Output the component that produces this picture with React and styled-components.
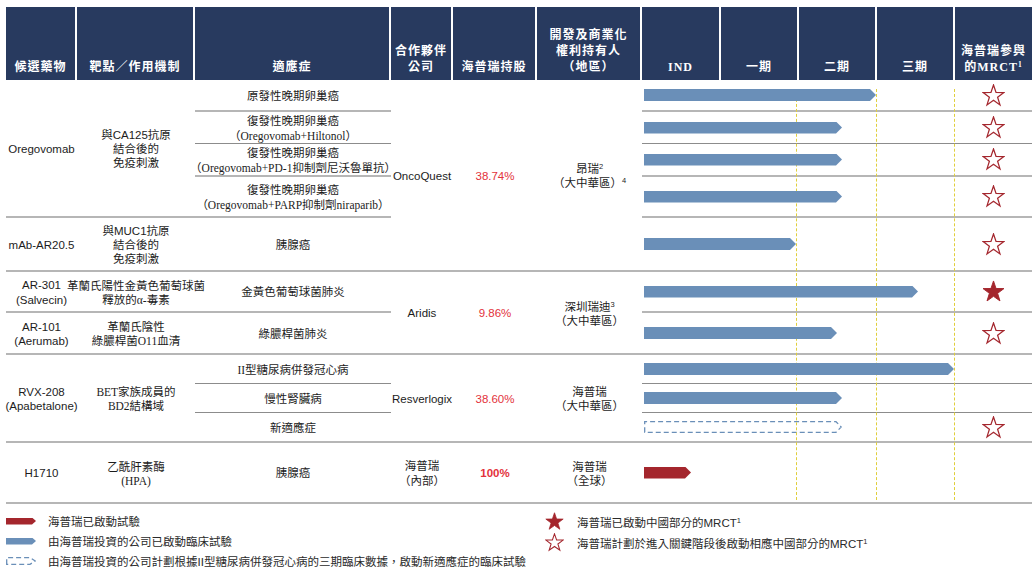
import styled, { createGlobalStyle } from 'styled-components';

const GlobalStyle = createGlobalStyle`
  html, body {
    margin: 0;
    padding: 0;
    background: #fff;
  }
  body {
    font-family: "Liberation Sans", "Noto Sans CJK TC", sans-serif;
    color: #1c1c1c;
  }
`;

const SANS = '"Liberation Sans", "Noto Sans CJK TC", sans-serif';
const SERIF = '"Liberation Serif", "Noto Sans CJK TC", serif';
const BLUE = '#6a8fb8';
const RED = '#a4262d';

const COLS = '71px 118px 196px 62px 84px 105px 79px 78px 78px 78px 77px';
const ROWS = '32px 32px 33px 41px 54px 41px 42px 29px 29px 30px 61px';

const lines = {
  thick: '2px solid #b6b6b6',
  thin: '1px solid #8c8c8c',
};

const Page = styled.div`
  width: 1026px;
  padding: 7px 0 0 6px;
`;

const HeaderRow = styled.div`
  display: grid;
  grid-template-columns: ${COLS};
  height: 73px;
`;

const HeadCell = styled.div`
  background: #283a5f;
  color: #fff;
  border-right: 2px solid #fff;
  display: flex;
  flex-direction: column;
  justify-content: flex-end;
  align-items: center;
  padding-bottom: 5px;
  font: bold 12px/16px ${SERIF};
  letter-spacing: 1px;
  text-align: center;
  white-space: nowrap;

  &:last-child {
    border-right: none;
  }
`;

const Body = styled.div`
  display: grid;
  grid-template-columns: ${COLS};
  grid-template-rows: ${ROWS};
`;

const Cell = styled.div`
  grid-column: ${p => p.$col};
  grid-row: ${p => p.$row};
  display: flex;
  flex-direction: column;
  align-items: center;
  justify-content: center;
  padding-top: 2px;
  text-align: center;
  white-space: nowrap;
  font-family: ${p => (p.$serif ? SERIF : SANS)};
  font-size: 11.5px;
  line-height: 14.5px;
  color: #1c1c1c;
  border-bottom: ${p => (p.$line ? lines[p.$line] : 'none')};
`;

const DrugCell = styled(Cell)`
  font-size: 11.5px;
`;

const TargetCell = styled(Cell)`
  line-height: 14px;
`;

const IndicationCell = styled(Cell).attrs({ $serif: true })`
  font-size: 11.5px;
`;

const PartnerCell = styled(Cell)`
  font-size: 11.5px;
`;

const StakeCell = styled(Cell)`
  color: #e3323b;
  font-weight: ${p => (p.$bold ? 700 : 400)};
  font-size: 11.5px;
`;

const HolderCell = styled(Cell)`
  line-height: 14px;
`;

const TrackCell = styled.div`
  grid-column: 7 / 12;
  grid-row: ${p => p.$row};
  display: flex;
  align-items: center;
  border-bottom: ${p => (p.$line ? lines[p.$line] : 'none')};
`;

const BarArea = styled.div`
  flex: 1;
  display: flex;
  align-items: center;
  padding-left: 2px;
`;

const Bar = styled.div`
  height: 12px;
  background: ${p => (p.$red ? RED : BLUE)};
  clip-path: polygon(0 0, calc(100% - 6px) 0, 100% 50%, calc(100% - 6px) 100%, 0 100%);
`;

const StarSlot = styled.div`
  width: 77px;
  display: flex;
  justify-content: center;
  align-items: center;
`;

const PhaseGuide = styled.div`
  grid-column: ${p => p.$col};
  grid-row: 1 / -1;
  margin: 9px ${p => p.$inset || 0}px 4px 0;
  border-right: 1.5px dashed #e0cf3c;
  pointer-events: none;
`;

const Sup = styled.span`
  font-size: 7.5px;
  line-height: 0;
  vertical-align: 4px;
`;

const Legend = styled.div`
  display: grid;
  grid-template-columns: 539px 1fr;
  padding-top: 7px;
`;

const LegendCol = styled.div`
  display: flex;
  flex-direction: column;
`;

const LegendItem = styled.div`
  display: flex;
  align-items: center;
  height: ${p => p.$h || 20}px;
  gap: ${p => p.$gap || 12}px;
  font: 11.5px ${SANS};
  color: #2a2a2a;
  white-space: nowrap;
`;

const Swatch = styled.div`
  width: 30px;
  height: 7px;
  background: ${p => (p.$red ? RED : BLUE)};
  clip-path: polygon(0 0, calc(100% - 4px) 0, 100% 50%, calc(100% - 4px) 100%, 0 100%);
`;

const StarSvg = ({ filled, size = 23 }) => (
  <svg width={size} height={size} viewBox="0 0 24 24">
    <polygon
      points="12,1 14.65,8.86 22.94,8.95 16.28,13.89 18.76,21.8 12,17 5.24,21.8 7.72,13.89 1.06,8.95 9.35,8.86"
      fill={filled ? RED : '#fff'}
      stroke={RED}
      strokeWidth={filled ? 1 : 1.3}
      strokeLinejoin="miter"
    />
  </svg>
);

const DashedArrow = ({ width, height = 12 }) => (
  <svg width={width} height={height} viewBox={`0 0 ${width} ${height}`}>
    <path
      d={`M0.7,${height - 0.7} V0.7 H${width - 6} L${width - 0.8},${height / 2} L${width - 6},${height - 0.7} Z`}
      fill="none"
      stroke={BLUE}
      strokeWidth="1.3"
      strokeDasharray="5 3"
    />
  </svg>
);

const tracks = [
  { row: 1, line: 'thick', width: 232, star: 'outline' },
  { row: 2, line: 'thin', width: 198, star: 'outline' },
  { row: 3, line: 'thick', width: 198, star: 'outline' },
  { row: 4, line: 'thick', width: 198, star: 'outline' },
  { row: 5, line: 'thick', width: 152, star: 'outline' },
  { row: 6, line: 'thick', width: 274, star: 'filled' },
  { row: 7, line: 'thick', width: 193, star: 'outline' },
  { row: 8, line: 'thin', width: 310 },
  { row: 9, line: 'thin', width: 198 },
  { row: 10, line: 'thick', width: 198, star: 'outline', dashed: true },
  { row: 11, line: 'thick', width: 47, red: true },
];

const Track = ({ row, line, width, star, dashed, red }) => (
  <TrackCell $row={row} $line={line}>
    <BarArea>
      {dashed ? <DashedArrow width={width} /> : <Bar $red={red} style={{ width }} />}
    </BarArea>
    <StarSlot>{star && <StarSvg filled={star === 'filled'} />}</StarSlot>
  </TrackCell>
);

const App = () => (
  <>
    <GlobalStyle />
    <Page>
      <HeaderRow>
        <HeadCell>候選藥物</HeadCell>
        <HeadCell>靶點／作用機制</HeadCell>
        <HeadCell>適應症</HeadCell>
        <HeadCell>
          <span>合作夥伴</span>
          <span>公司</span>
        </HeadCell>
        <HeadCell>海普瑞持股</HeadCell>
        <HeadCell>
          <span>開發及商業化</span>
          <span>權利持有人</span>
          <span>（地區）</span>
        </HeadCell>
        <HeadCell>IND</HeadCell>
        <HeadCell>一期</HeadCell>
        <HeadCell>二期</HeadCell>
        <HeadCell>三期</HeadCell>
        <HeadCell>
          <span>海普瑞參與</span>
          <span>
            的MRCT<Sup>1</Sup>
          </span>
        </HeadCell>
      </HeaderRow>

      <Body>
        {/* Oregovomab */}
        <DrugCell $col="1" $row="1 / 5" $line="thick">Oregovomab</DrugCell>
        <TargetCell $col="2" $row="1 / 5" $line="thick">
          <span>與CA125抗原</span>
          <span>結合後的</span>
          <span>免疫刺激</span>
        </TargetCell>
        <IndicationCell $col="3" $row="1" $line="thick">原發性晚期卵巢癌</IndicationCell>
        <IndicationCell $col="3" $row="2" $line="thin">
          <span>復發性晚期卵巢癌</span>
          <span>（Oregovomab+Hiltonol）</span>
        </IndicationCell>
        <IndicationCell $col="3" $row="3" $line="thick">
          <span>復發性晚期卵巢癌</span>
          <span>（Oregovomab+PD-1抑制劑尼沃魯單抗）</span>
        </IndicationCell>
        <IndicationCell $col="3" $row="4" $line="thick">
          <span>復發性晚期卵巢癌</span>
          <span>（Oregovomab+PARP抑制劑niraparib）</span>
        </IndicationCell>
        <PartnerCell $col="4" $row="1 / 6" $line="thick">OncoQuest</PartnerCell>
        <StakeCell $col="5" $row="1 / 6" $line="thick">38.74%</StakeCell>
        <HolderCell $col="6" $row="1 / 6" $line="thick">
          <span>
            昂瑞<Sup>2</Sup>
          </span>
          <span>
            （大中華區）<Sup>4</Sup>
          </span>
        </HolderCell>

        {/* mAb-AR20.5 */}
        <DrugCell $col="1" $row="5" $line="thick">mAb-AR20.5</DrugCell>
        <TargetCell $col="2" $row="5" $line="thick">
          <span>與MUC1抗原</span>
          <span>結合後的</span>
          <span>免疫刺激</span>
        </TargetCell>
        <IndicationCell $col="3" $row="5" $line="thick">胰腺癌</IndicationCell>

        {/* AR-301 / AR-101 */}
        <DrugCell $col="1" $row="6" $line="thick">
          <span>AR-301</span>
          <span>(Salvecin)</span>
        </DrugCell>
        <TargetCell $col="2" $row="6" $line="thick" $serif>
          <span>革蘭氏陽性金黃色葡萄球菌</span>
          <span>釋放的α-毒素</span>
        </TargetCell>
        <IndicationCell $col="3" $row="6" $line="thick">金黃色葡萄球菌肺炎</IndicationCell>
        <DrugCell $col="1" $row="7" $line="thick">
          <span>AR-101</span>
          <span>(Aerumab)</span>
        </DrugCell>
        <TargetCell $col="2" $row="7" $line="thick" $serif>
          <span>革蘭氏陰性</span>
          <span>綠膿桿菌O11血清</span>
        </TargetCell>
        <IndicationCell $col="3" $row="7" $line="thick">綠膿桿菌肺炎</IndicationCell>
        <PartnerCell $col="4" $row="6 / 8" $line="thick">Aridis</PartnerCell>
        <StakeCell $col="5" $row="6 / 8" $line="thick">9.86%</StakeCell>
        <HolderCell $col="6" $row="6 / 8" $line="thick">
          <span>
            深圳瑞迪<Sup>3</Sup>
          </span>
          <span>（大中華區）</span>
        </HolderCell>

        {/* RVX-208 */}
        <DrugCell $col="1" $row="8 / 11" $line="thick">
          <span>RVX-208</span>
          <span>(Apabetalone)</span>
        </DrugCell>
        <TargetCell $col="2" $row="8 / 11" $line="thick" $serif>
          <span>BET家族成員的</span>
          <span>BD2結構域</span>
        </TargetCell>
        <IndicationCell $col="3" $row="8" $line="thin">II型糖尿病併發冠心病</IndicationCell>
        <IndicationCell $col="3" $row="9" $line="thin">慢性腎臟病</IndicationCell>
        <IndicationCell $col="3" $row="10" $line="thick">新適應症</IndicationCell>
        <PartnerCell $col="4" $row="8 / 11" $line="thick">Resverlogix</PartnerCell>
        <StakeCell $col="5" $row="8 / 11" $line="thick">38.60%</StakeCell>
        <HolderCell $col="6" $row="8 / 11" $line="thick">
          <span>海普瑞</span>
          <span>（大中華區）</span>
        </HolderCell>

        {/* H1710 */}
        <DrugCell $col="1" $row="11" $line="thick">H1710</DrugCell>
        <TargetCell $col="2" $row="11" $line="thick">
          <span>乙酰肝素酶</span>
          <span style={{ fontFamily: SERIF }}>(HPA)</span>
        </TargetCell>
        <IndicationCell $col="3" $row="11" $line="thick">胰腺癌</IndicationCell>
        <PartnerCell $col="4" $row="11" $line="thick">
          <span>海普瑞</span>
          <span>（內部）</span>
        </PartnerCell>
        <StakeCell $col="5" $row="11" $line="thick" $bold>100%</StakeCell>
        <HolderCell $col="6" $row="11" $line="thick">
          <span>海普瑞</span>
          <span>（全球）</span>
        </HolderCell>

        {tracks.map(t => (
          <Track key={t.row} {...t} />
        ))}

        <PhaseGuide $col="8" $inset={2} />
        <PhaseGuide $col="9" />
        <PhaseGuide $col="10" />
      </Body>

      <Legend>
        <LegendCol>
          <LegendItem>
            <Swatch $red />
            海普瑞已啟動試驗
          </LegendItem>
          <LegendItem>
            <Swatch />
            由海普瑞投資的公司已啟動臨床試驗
          </LegendItem>
          <LegendItem>
            <DashedArrow width={30} height={8} />
            由海普瑞投資的公司計劃根據II型糖尿病併發冠心病的三期臨床數據，啟動新適應症的臨床試驗
          </LegendItem>
        </LegendCol>
        <LegendCol>
          <LegendItem $h={21} $gap={13}>
            <StarSvg filled size={19} />
            <span>
              海普瑞已啟動中國部分的MRCT<Sup>1</Sup>
            </span>
          </LegendItem>
          <LegendItem $h={21} $gap={13}>
            <StarSvg size={19} />
            <span>
              海普瑞計劃於進入關鍵階段後啟動相應中國部分的MRCT<Sup>1</Sup>
            </span>
          </LegendItem>
        </LegendCol>
      </Legend>
    </Page>
  </>
);

export default App;
